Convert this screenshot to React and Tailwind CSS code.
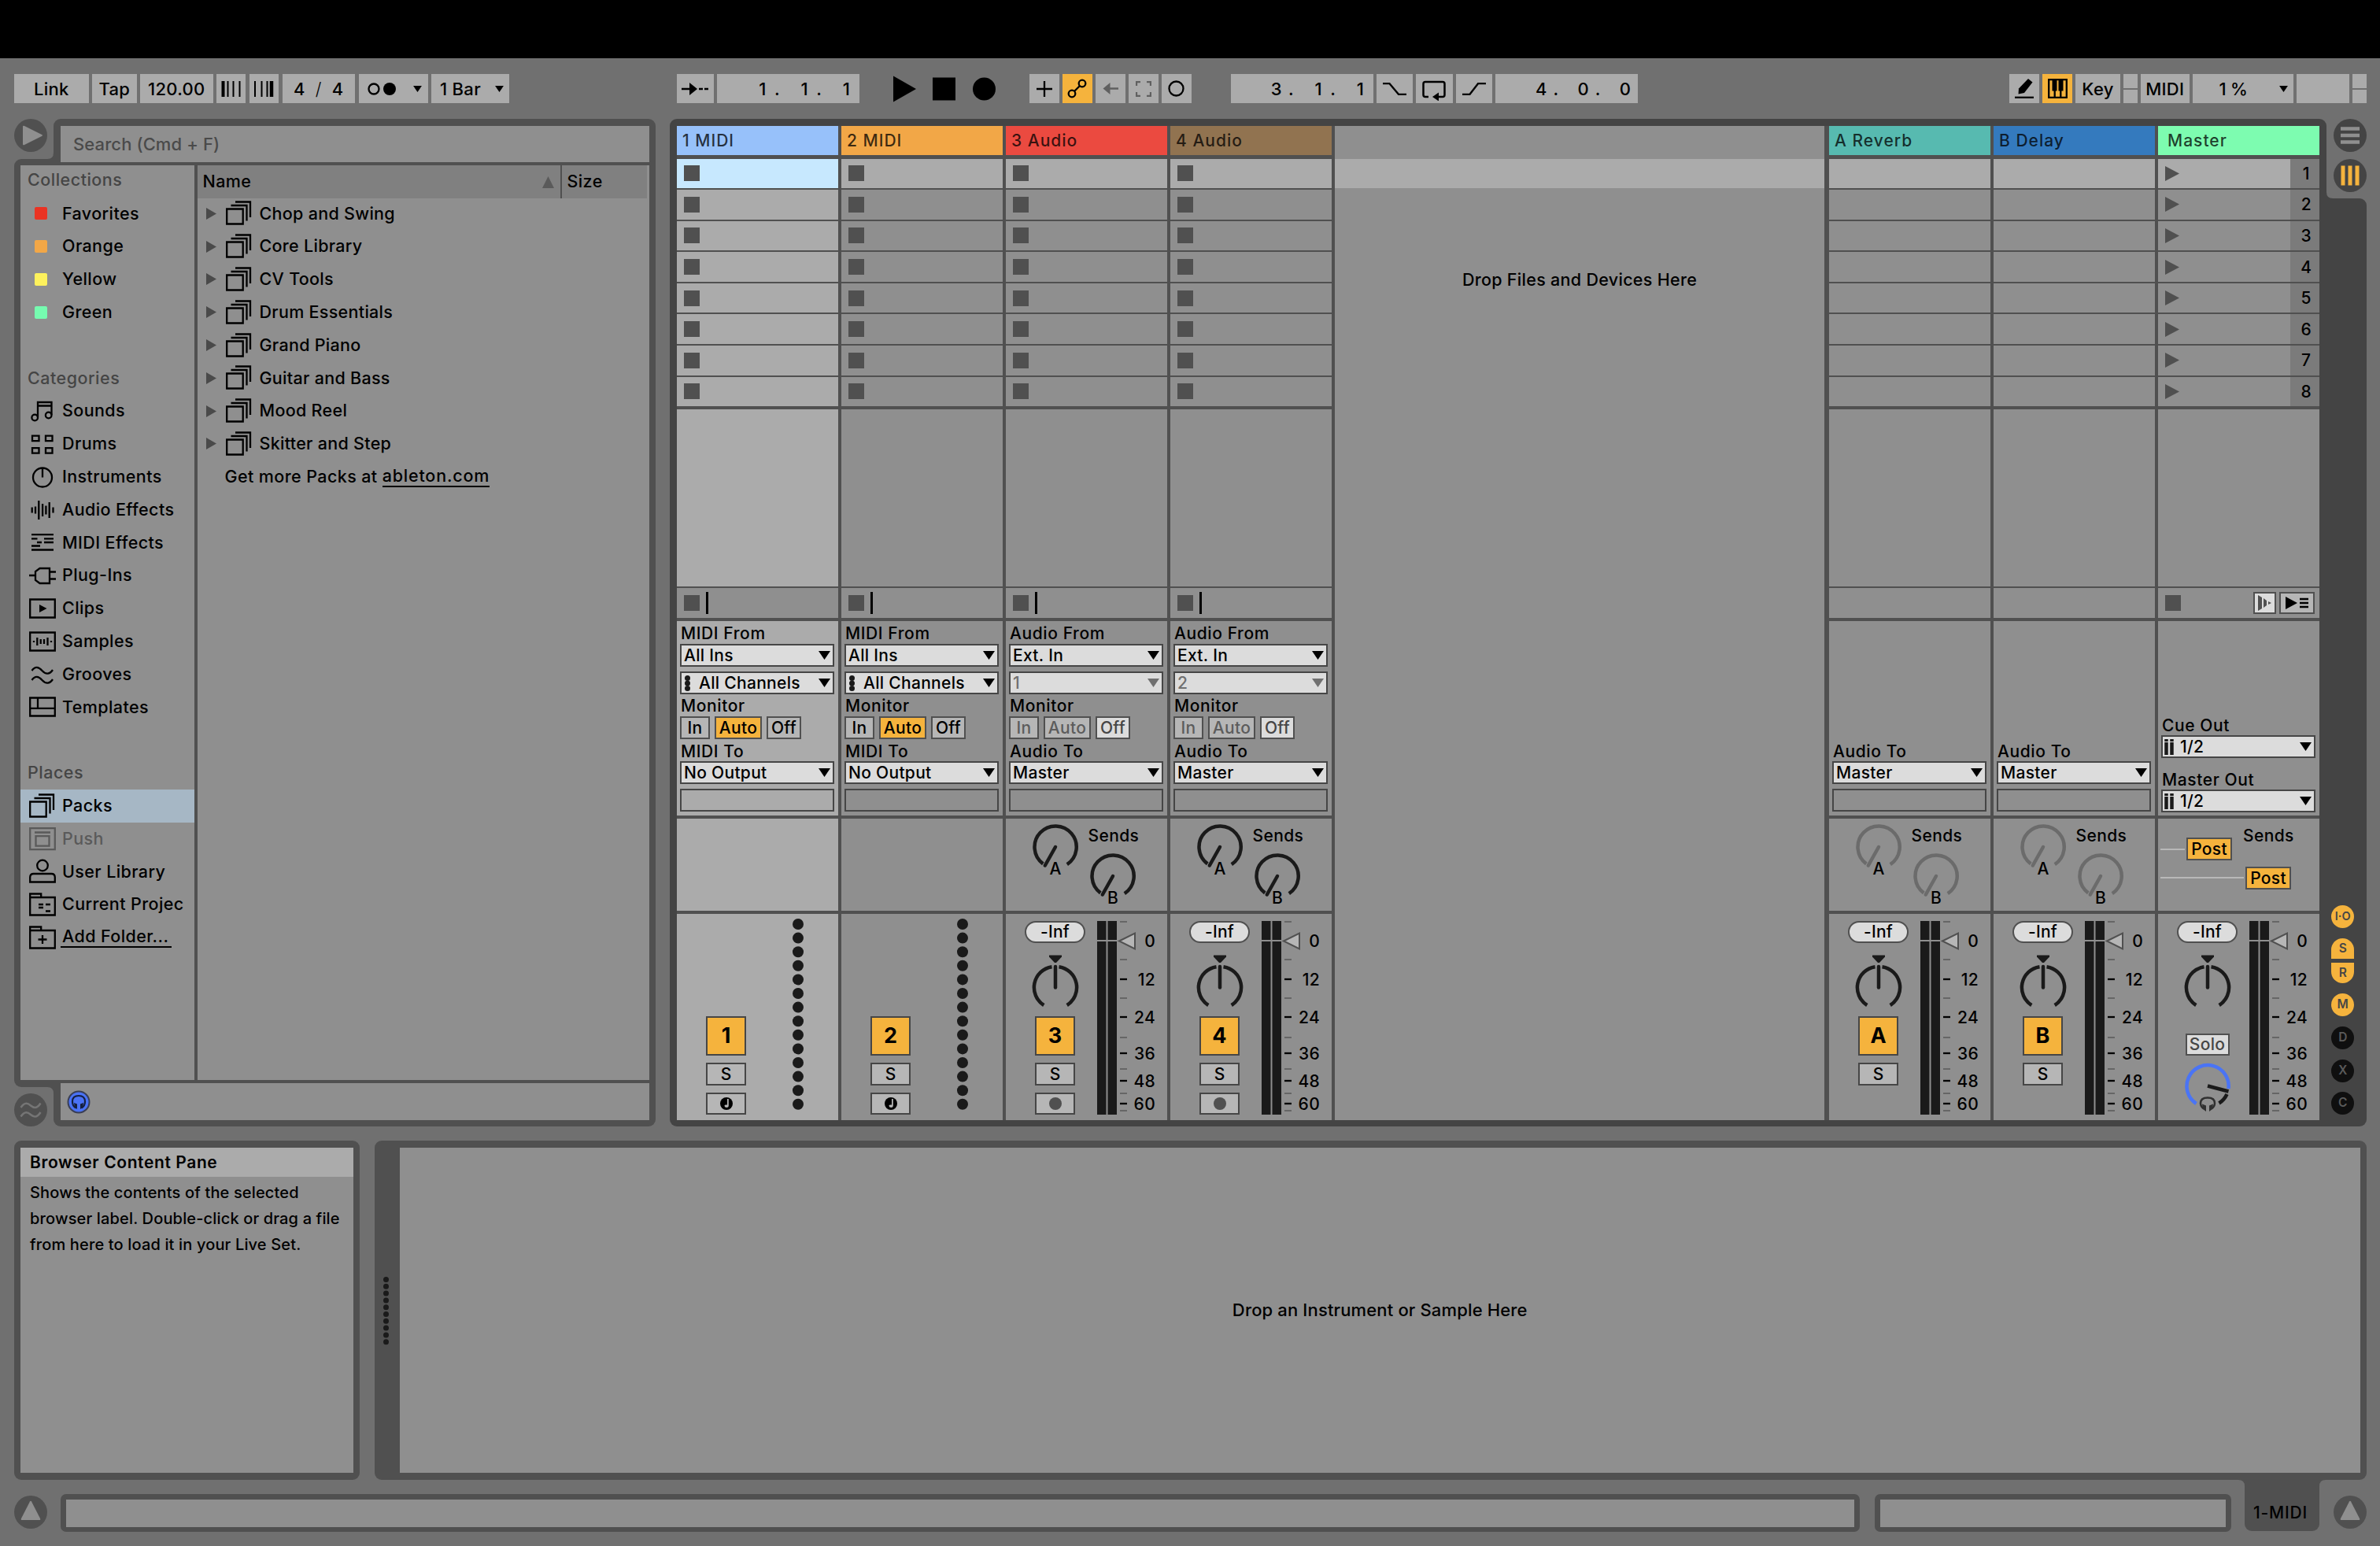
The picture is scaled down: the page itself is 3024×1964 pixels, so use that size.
const packs = [
  "Chop and Swing",
  "Core Library",
  "CV Tools",
  "Drum Essentials",
  "Grand Piano",
  "Guitar and Bass",
  "Mood Reel",
  "Skitter and Step",
];

const collections = [
  { name: "Favorites", color: "bg-[#ea3323]" },
  { name: "Orange", color: "bg-[#f2a747]" },
  { name: "Yellow", color: "bg-[#fdf15c]" },
  { name: "Green", color: "bg-[#76fbb0]" },
];

const sidebarIcons = {
  Sounds: (
    <>
      <path d="M11 25V6h17.5v16M11 10.5h17.5" />
      <circle cx="7.2" cy="25.5" r="3.8" />
      <circle cx="24.7" cy="22.5" r="3.8" />
    </>
  ),
  Drums: <path d="M4 6.7h8.5v6.5H4zM21 6.7h8.5v6.5H21zM4 22.2h8.5v6.5H4zM21 22.2h8.5v6.5H21z" />,
  Instruments: (
    <>
      <circle cx="17" cy="17.5" r="12" />
      <path d="M17 5.5v12" />
    </>
  ),
  "Audio Effects": <path d="M3.7 13.5v7M8 12.5v9M12.3 5v24M17.1 9v16M21.4 11.5v11M25.7 7v20M30.5 13.5v7" />,
  "MIDI Effects": <path d="M3 7.2h28M3 12.4h7.5M19 12.4h12M10 17h6M19 17h12M3 21.5h11M3 26.5h28" />,
  "Plug-Ins": <path d="M0 17h8M26 8v19H13.5L8 23V12l5.5-4zM26 12.5h8M26 21.5h8" />,
  Clips: (
    <>
      <path d="M1.2 5.5h31.6v23H1.2z" />
      <path d="M13 12l9.5 5-9.5 5z" fill="currentColor" stroke="none" />
    </>
  ),
  Samples: <path d="M1.2 5.5h31.6v23H1.2zM6 16v2M10.3 12v10M14.7 14v6M19 14v6M23.5 12v10M28 16v2" />,
  Grooves: <path d="M3.5 12c4-6 8.5-5 13 0s9.500 5 13.500-1M3.500 24c4-6 8.500-5 13 0s9.500 5 13.500-1" />,
  Templates: <path d="M1.2 5.5h31.6v23H1.2zM1.2 18.8h31.6M11 5.5v13.3" />,
  Packs: <path d="M1.2 11.5h20.5v19H1.2zM6.5 7h20v19.5M12 2.5h19v19.5" />,
  Push: <path d="M1.2 3.2h31.6v27H1.2zM7 8.5h20M8.5 13.2h17v12.5h-17z" />,
  "User Library": (
    <>
      <circle cx="17" cy="9.5" r="6.8" />
      <path d="M1.2 30.5v-6q0-4.5 4.5-4.5h22.600q4.500 0 4.500 4.500v6z" />
    </>
  ),
  "Current Projec": (
    <path d="M1.2 30.5v-27h14v4.5h17.6v22.5zM1.2 8h14M12 17h6M21 17h6M12 21h6M21 25.5h6" />
  ),
  "Add Folder...": <path d="M1.2 30.5v-27h14v4.5h17.6v22.5zM1.2 8h14M17 14v11M11.5 19.5h11" />,
};

const categories = [
  "Sounds",
  "Drums",
  "Instruments",
  "Audio Effects",
  "MIDI Effects",
  "Plug-Ins",
  "Clips",
  "Samples",
  "Grooves",
  "Templates",
];
const places = ["Packs", "Push", "User Library", "Current Projec", "Add Folder..."];

const tracks = [
  { id: "1", name: "1 MIDI", kind: "MIDI", header: "bg-[#97c1fa]", selected: true },
  { id: "2", name: "2 MIDI", kind: "MIDI", header: "bg-[#f2a747]" },
  { id: "3", name: "3 Audio", kind: "Audio", header: "bg-[#eb4a40]", channel: "1" },
  { id: "4", name: "4 Audio", kind: "Audio", header: "bg-[#917350]", channel: "2" },
];
const returns = [
  { id: "A", name: "A Reverb", header: "bg-[#57bab0]" },
  { id: "B", name: "B Delay", header: "bg-[#347abe]" },
];
const scenes = [1, 2, 3, 4, 5, 6, 7, 8];

// y positions inside the meter drawing
const majorTicks = [
  [74, "12"],
  [122, "24"],
  [168, "36"],
  [203, "48"],
  [232, "60"],
];
const minorTicks = [1, 49, 98, 148, 188, 219, 241];

function Corner({ className }) {
  return (
    <svg className={`absolute size-2 ${className}`} viewBox="0 0 8 8">
      <path d="M8 0v8H0q8 0 8-8" fill="currentColor" />
    </svg>
  );
}

function SideIcon({ name }) {
  return (
    <svg className="h-[34px] w-[34px] shrink-0" viewBox="0 0 34 34" fill="none" stroke="currentColor" strokeWidth="2.3">
      {sidebarIcons[name]}
    </svg>
  );
}

function Down({ className = "" }) {
  return (
    <svg className={`h-[11px] w-[15px] ${className}`} viewBox="0 0 15 11">
      <path d="M0 0h15L7.5 11z" fill="currentColor" />
    </svg>
  );
}

function Cell({ className = "", children }) {
  return (
    <div className={`flex h-[37px] shrink-0 items-center justify-center bg-[#ababab] whitespace-pre ${className}`}>
      {children}
    </div>
  );
}

function Position({ values }) {
  return (
    <Cell className="w-[181px] justify-end! pr-2">
      {values.map((v, i) => (
        <span key={i} className="flex">
          <span className="w-4 text-center">{v}</span>
          {i < 2 && <span className="w-[37.3px] pl-[7px] text-left">.</span>}
        </span>
      ))}
    </Cell>
  );
}

function Toolbar() {
  return (
    <div className="flex h-[77px] items-center pl-[18px] text-[22px] tracking-[0.3px]">
      <div className="flex gap-[4.5px]">
        <Cell className="w-[94.5px]">Link</Cell>
        <Cell className="w-[56.5px]">Tap</Cell>
        <Cell className="w-[92.5px]">120.00</Cell>
        <Cell className="w-[37px]">
          <svg className="h-5 w-[26px]" viewBox="0 0 26 20" stroke="#000">
            <path d="M2.5 0v20" strokeWidth="4" />
            <path d="M8.5 0v20M15.5 0v20M23.5 0v20" strokeWidth="2" />
          </svg>
        </Cell>
        <Cell className="w-[37.5px]">
          <svg className="h-5 w-[26px]" viewBox="0 0 26 20" stroke="#000">
            <path d="M2 0v20M10.5 0v20M17.5 0v20" strokeWidth="2" />
            <path d="M23 0v20" strokeWidth="4.5" />
          </svg>
        </Cell>
        <Cell className="w-[92.5px] gap-[13px]">
          <span>4</span>
          <span className="font-light">/</span>
          <span>4</span>
        </Cell>
        <Cell className="w-[88px] gap-[22px] pl-1">
          <svg className="h-4 w-9" viewBox="0 0 36 16">
            <circle cx="8" cy="8" r="6.5" fill="none" stroke="#000" strokeWidth="2.3" />
            <circle cx="28" cy="8" r="8" />
          </svg>
          <Down className="h-2! w-[11px]!" />
        </Cell>
        <Cell className="w-[99px] gap-[18px] pl-1">
          <span>1 Bar</span>
          <Down className="h-2! w-[11px]!" />
        </Cell>
      </div>

      <div className="ml-[213px] flex gap-1">
        <Cell className="w-[46.5px]">
          <svg className="h-4 w-[34px]" viewBox="0 0 34 16">
            <path d="M0 8h12M22 8h5M29 8h5" stroke="#000" strokeWidth="2.5" />
            <path d="M10 0l10 8-10 8z" />
          </svg>
        </Cell>
        <Position values={["1", "1", "1"]} />
      </div>

      <svg className="ml-[43px] h-[34px] w-[130px]" viewBox="0 0 130 34">
        <path d="M0 .5l29 16.5L0 33.5z" />
        <path d="M50 2.5h29v29H50z" />
        <circle cx="115.5" cy="17" r="14.5" />
      </svg>

      <div className="ml-[43px] flex gap-1">
        <Cell className="w-[38px]">
          <svg className="h-5 w-5" viewBox="0 0 20 20">
            <path d="M10 0v20M0 10h20" stroke="#000" strokeWidth="2.3" />
          </svg>
        </Cell>
        <Cell className="w-[38px] bg-[#f5b33d]!">
          <svg className="h-[25px] w-[25px]" viewBox="0 0 25 25" fill="none" stroke="#000" strokeWidth="2.3">
            <circle cx="6" cy="19" r="4.3" />
            <circle cx="19" cy="6" r="4.3" />
            <path d="M9 16l7-7" />
          </svg>
        </Cell>
        <Cell className="w-[38px] text-[#606060]">
          <svg className="h-[17px] w-5" viewBox="0 0 20 17">
            <path d="M8 8.5h12" stroke="currentColor" strokeWidth="2.5" />
            <path d="M9.5 1v15L.5 8.5z" fill="currentColor" />
          </svg>
        </Cell>
        <Cell className="w-[38px] text-[#606060]">
          <svg className="h-5 w-5" viewBox="0 0 20 20" fill="none" stroke="currentColor" strokeWidth="2.3">
            <path d="M1 6V1h5M14 1h5v5M19 14v5h-5M6 19H1v-5" />
          </svg>
        </Cell>
        <Cell className="w-[38px]">
          <svg className="h-[21px] w-[21px]" viewBox="0 0 21 21" fill="none" stroke="#000" strokeWidth="2.3">
            <circle cx="10.5" cy="10.5" r="9" />
          </svg>
        </Cell>
      </div>

      <div className="ml-[50px] flex gap-1">
        <Position values={["3", "1", "1"]} />
        <Cell className="w-[46.5px]">
          <svg className="h-4 w-[30px]" viewBox="0 0 30 16" fill="none" stroke="#000" strokeWidth="2.3">
            <path d="M0 1.2h8.5L20 14.8h10" />
          </svg>
        </Cell>
        <Cell className="w-[46.5px]">
          <svg className="mt-1 h-[26px] w-[30px]" viewBox="0 0 30 26" fill="none" stroke="#000" strokeWidth="2.5">
            <path d="M8 21H4q-2.500 0-2.500-2.500v-14Q1.500 2 4 2h22q2.500 0 2.500 2.500v14Q28.500 21 26 21h-5" />
            <path d="M13 21l8-5.5v11z" fill="#000" stroke="none" />
          </svg>
        </Cell>
        <Cell className="w-[46.5px]">
          <svg className="h-4 w-[30px]" viewBox="0 0 30 16" fill="none" stroke="#000" strokeWidth="2.3">
            <path d="M0 14.8h9.5L20 1.2h10" />
          </svg>
        </Cell>
        <Position values={["4", "0", "0"]} />
      </div>

      <div className="mr-[17.5px] ml-auto flex gap-1">
        <Cell className="w-[38px]">
          <svg className="h-[25px] w-6" viewBox="0 0 24 25">
            <path d="M0 23.8h24" stroke="#000" strokeWidth="2.3" />
            <path d="M5 12.5L17 0l5.500 4.500L12 18l-7.500 1.500z" />
          </svg>
        </Cell>
        <Cell className="w-[38px] bg-[#f5b33d]!">
          <svg className="h-[25px] w-[25px]" viewBox="0 0 25 25">
            <path d="M1.2 1.2h22.6v22.6H1.2zM8.7 14v10M16.3 14v10" fill="none" stroke="#000" strokeWidth="2.3" />
            <path d="M5.5 1h6v14.500h-6zM13.500 1h6v14.500h-6z" />
          </svg>
        </Cell>
        <Cell className="w-[57px]">Key</Cell>
        <div className="flex w-[18px] flex-col gap-0.5">
          <div className="flex-1 bg-[#ababab]" />
          <div className="flex-1 bg-[#ababab]" />
        </div>
        <Cell className="w-[61.5px]">MIDI</Cell>
        <Cell className="w-32 justify-end! gap-[40px] pr-[7px]">
          <span className="tracking-[-0.3px]">1 %</span>
          <Down className="h-2! w-[11px]!" />
        </Cell>
        <Cell className="w-[67px]" />
        <div className="flex w-[18px] flex-col gap-0.5">
          <div className="flex-1 bg-[#ababab]" />
          <div className="flex-1 bg-[#ababab]" />
        </div>
      </div>
    </div>
  );
}

function Sidebar() {
  const row = "flex h-[41.8px] items-center gap-2 pl-[11px] whitespace-nowrap";
  const heading = "flex h-[41.8px] items-center pl-[9px] font-medium tracking-[0.5px] text-[#454545]";
  return (
    <div className="w-[220.5px] shrink-0 overflow-hidden bg-[#8f8f8f]">
      <div className={`${heading} h-[40.5px]! pb-[3px]`}>Collections</div>
      {collections.map((c) => (
        <div key={c.name} className={row}>
          <span className="flex w-[34px] pl-[7px]">
            <span className={`size-4 rounded-xs ${c.color}`} />
          </span>
          {c.name}
        </div>
      ))}
      <div className="h-[41.8px]" />
      <div className={heading}>Categories</div>
      {categories.map((name) => (
        <div key={name} className={row}>
          <SideIcon name={name} />
          {name}
        </div>
      ))}
      <div className="h-[41.8px]" />
      <div className={heading}>Places</div>
      {places.map((name) => (
        <div
          key={name}
          className={`${row} ${name === "Packs" ? "bg-[#a6b7c5]" : ""} ${name === "Push" ? "text-[#5a5a5a]" : ""}`}
        >
          <SideIcon name={name} />
          <span className={name.startsWith("Add") ? "-ml-0.5 border-b-[2.5px] border-black pr-1 pl-0.5 leading-[25px]" : ""}>
            {name}
          </span>
        </div>
      ))}
    </div>
  );
}

function Browser() {
  return (
    <div className="flex w-[815px] flex-col text-[21.5px] tracking-[0.4px]">
      <div className="flex h-[51px]">
        <div className="w-[50px] shrink-0">
          <svg className="size-[42px]" viewBox="0 0 42 42">
            <circle cx="21" cy="21" r="21" fill="#505050" />
            <path d="M11 10q0-2 2-1l22 11q2 1 0 2L13 33q-2 1-2-1z" fill="#8f8f8f" />
          </svg>
        </div>
        <div className="relative flex-1 rounded-t-[9px] bg-[#505050] pt-[9px] pr-2 pl-[9px] text-[#505050]">
          <Corner className="bottom-0 -left-2" />
          <div className="flex h-[46px] items-center bg-[#8f8f8f] pl-4 text-[22px] tracking-[0.1px] text-[#4a4a4a]">
            Search (Cmd + F)
          </div>
        </div>
      </div>
      <div className="flex h-[1179px] rounded-l-[9px] bg-[#505050] px-2 pt-2">
        <div className="flex h-[1162px] w-full gap-1">
          <Sidebar />
          <div className="flex flex-1 flex-col bg-[#8f8f8f]">
            <div className="mr-[3px] flex h-[42px] shrink-0 items-center bg-[#808080] font-medium">
              <div className="flex h-full w-[463px] items-center justify-between border-r-2 border-[#505050] pr-2 pl-[7px]">
                Name
                <svg className="h-[15px] w-[15px]" viewBox="0 0 15 15">
                  <path d="M0 15L7.5 0 15 15z" fill="#5a5a5a" />
                </svg>
              </div>
              <span className="pl-[7px]">Size</span>
            </div>
            <div className="-mt-[1.5px]">
              {packs.map((name) => (
                <div key={name} className="flex h-[41.8px] shrink-0 items-center pl-[11px]">
                  <svg className="mr-[12px] h-[15px] w-[13px]" viewBox="0 0 13 15">
                    <path d="M0 0l13 7.5L0 15z" fill="#4a4a4a" />
                  </svg>
                  <SideIcon name="Packs" />
                  <span className="pl-[9px] tracking-[0.3px]">{name}</span>
                </div>
              ))}
              <div className="flex h-[41.8px] items-center pl-[35px]">
                Get more Packs at&nbsp;
                <span className="border-b-[2.5px] border-black leading-[25px] tracking-[0.8px]">ableton.com</span>
              </div>
            </div>
          </div>
        </div>
      </div>
      <div className="flex h-[50px]">
        <div className="w-[50px] shrink-0 pt-[8px]">
          <svg className="size-[42px]" viewBox="0 0 42 42" fill="none">
            <circle cx="21" cy="21" r="21" fill="#505050" />
            <path
              d="M8.5 18c5-7.500 9-5.500 12.500-2.500s8 4.500 12.500-3M8.500 29.500c5-7.500 9-5.500 12.500-2.500s8 4.500 12.500-3"
              stroke="#757575"
              strokeWidth="2.5"
            />
          </svg>
        </div>
        <div className="relative flex-1 rounded-b-[9px] bg-[#505050] pr-2 pb-2 pl-[9px] text-[#505050]">
          <Corner className="top-0 -left-2 -scale-y-100" />
          <div className="-mt-[5px] flex h-[47px] items-center bg-[#8f8f8f] pl-2">
            <svg className="size-[30px]" viewBox="0 0 30 30">
              <circle cx="15" cy="15" r="13.5" fill="#4a72f5" stroke="#3a3f55" strokeWidth="2" />
              <path d="M11.5 22.5Q7 20 7 14.5q0-7.500 8-7.500t8 7.500q0 5.500-4.500 8" fill="none" stroke="#152040" strokeWidth="2.2" />
              <path d="M9 16l4 1.500v6.500l-3-2zM21 16l-4 1.500v6.500l3-2z" fill="#152040" />
            </svg>
          </div>
        </div>
      </div>
    </div>
  );
}

function Select({ children, disabled, icon }) {
  return (
    <div
      className={`flex h-[29px] w-[196px] shrink-0 items-center border-2 border-[#464646] bg-[#dcdcdc] px-[3px] whitespace-nowrap ${disabled ? "text-[#707070]" : "text-black"}`}
    >
      {icon === "dots" && (
        <svg className="mr-[11px] ml-px h-5 w-[7px]" viewBox="0 0 7 20" fill="#1a1a1a">
          <circle cx="3.5" cy="3.5" r="3.5" />
          <circle cx="3.5" cy="10" r="3.5" />
          <circle cx="3.5" cy="16.5" r="3.5" />
        </svg>
      )}
      {icon === "bars" && (
        <svg className="mr-2 -ml-px h-5 w-[12px]" viewBox="0 0 12 20">
          <path d="M2.5 0v20M9.5 0v20" stroke="#1a1a1a" strokeWidth="4.5" />
          <path d="M0 3.5h12" stroke="#dcdcdc" />
        </svg>
      )}
      {children}
      <Down className="ml-auto" />
    </div>
  );
}

function IoLabel({ children }) {
  return <div className="h-5 pl-px leading-[21px] font-medium tracking-[0.6px] whitespace-nowrap">{children}</div>;
}

function Monitor({ audio }) {
  const base = "flex h-[29px] items-center justify-center border-2 border-[#505050]";
  return (
    <div className={`flex h-[29px] ${audio ? "text-[#5c5c5c]" : ""}`}>
      <div className={`${base} w-[38px] bg-[#b6b6b6]`}>In</div>
      <div className={`${base} ml-1.5 w-[60px] ${audio ? "bg-[#b6b6b6]" : "bg-[#f5b33d]"}`}>Auto</div>
      <div className={`${base} ml-1.5 w-[44px] ${audio ? "bg-[#dcdcdc] text-[#464646]" : "bg-[#b6b6b6]"}`}>Off</div>
    </div>
  );
}

function OutputBox() {
  return <div className="h-[29px] w-[196px] border-2 border-[#464646]" />;
}

function Knob({ letter, dim }) {
  const color = dim ? "#6b6b6b" : "#1a1a1a";
  return (
    <svg className="h-[72px] w-[60px]" viewBox="0 0 60 72">
      <path d="M14.3 51.4A26.6 26.6 0 1 1 44.8 52.2" fill="none" stroke={color} strokeWidth="4.5" />
      <path d="M30 30L16.800 53.500" stroke={color} strokeWidth="4.5" strokeLinecap="round" />
      <text x="30" y="64.5" textAnchor="middle" fontSize="21">
        {letter}
      </text>
    </svg>
  );
}

function Sends({ dim }) {
  return (
    <div className="flex pl-[32.500px]">
      <div className="pt-1.5">
        <Knob letter="A" dim={dim} />
      </div>
      <div className="pt-[9px] pl-[13px]">
        <div className="-ml-px h-6 leading-[25px] font-medium tracking-[0.4px]">Sends</div>
        <div className="mt-[10px]">
          <Knob letter="B" dim={dim} />
        </div>
      </div>
    </div>
  );
}

function MasterSends() {
  const post = "flex h-[29px] w-[58px] items-center justify-center border-2 border-[#505050] bg-[#f5b33d]";
  return (
    <div className="-ml-px">
      <div className="flex pt-[9px]">
        <div className="mt-[29px] h-0.5 w-[31px] bg-[#b8b8b8]" />
        <div className={`${post} mt-[15px] ml-[2px]`}>Post</div>
        <div className="ml-3.5 leading-[25px] font-medium tracking-[0.4px]">Sends</div>
      </div>
      <div className="mt-[8px] flex items-center">
        <div className="h-0.5 w-[106px] bg-[#b8b8b8]" />
        <div className={`${post} ml-[2px]`}>Post</div>
      </div>
    </div>
  );
}

function Pan() {
  return (
    <svg className="mt-[13px] h-[72px] w-[60px] shrink-0" viewBox="0 0 60 72" fill="none" stroke="#1a1a1a" strokeWidth="4.5">
      <path d="M22 2.5h16v2l-7 7.5h-2l-7-7.500z" fill="#1a1a1a" stroke="none" />
      <path d="M15.3 66A26.600 26.600 0 0 1 25.5 17.2M34.500 17.2A26.600 26.600 0 0 1 44.700 66" />
      <path d="M30 17v26.500" strokeLinecap="round" />
    </svg>
  );
}

function CueKnob() {
  return (
    <svg className="mt-2 h-[66px] w-[60px] shrink-0" viewBox="0 0 60 66" fill="none" strokeWidth="4.5">
      <path d="M15.5 53A26.600 26.600 0 1 1 56.5 34" stroke="#4a74f5" />
      <path d="M54.5 41A26.600 26.600 0 0 1 44.5 52.5M30 30.500L56.500 37.500" stroke="#1a1a1a" />
      <path d="M25 59.500q-4-3-4-7 0-7 9-7t9 7q0 4-4 7" stroke="#303030" strokeWidth="2.5" />
      <path d="M23 53.500l5 2v7.500l-4-3zM37 53.500l-5 2v7.500l4-3z" fill="#303030" />
    </svg>
  );
}

function Meter() {
  return (
    <svg className="mt-[9px] ml-[15px] h-[248px] w-[76px] overflow-visible" viewBox="0 0 76 248">
      <path d="M0 0h11.500v246H0zM13.500 0h11.500v246H13.500z" fill="#1a1a1a" />
      <path d="M0 25h25" stroke="#8f8f8f" strokeWidth="2" />
      {minorTicks.map((y) => (
        <path key={y} d={`M29 ${y}h9`} stroke="#666" strokeWidth="2" />
      ))}
      {majorTicks.map(([y, label]) => (
        <g key={label}>
          <path d={`M29 ${y}h9`} stroke="#000" strokeWidth="2.3" />
          <text x="74" y={y + 7.5} textAnchor="end" fontSize="21">
            {label}
          </text>
        </g>
      ))}
      <path d="M28 25.5L48 15.5v20z" fill="#b6b6b6" stroke="#505050" strokeWidth="2" />
      <text x="74" y="33" textAnchor="end" fontSize="21">
        0
      </text>
    </svg>
  );
}

function MidiDots() {
  return (
    <svg className="mt-1.5 ml-[46px] h-[246px] w-[14px]" viewBox="0 0 14 246" fill="#1a1a1a">
      {Array.from({ length: 14 }, (_, i) => (
        <circle key={i} cx="7" cy={7 + i * 17.6} r="7" />
      ))}
    </svg>
  );
}

function Mixer({ id, midi, armable }) {
  const box = "flex w-[51px] items-center justify-center border-2 border-[#464646] bg-[#b6b6b6] tracking-normal";
  return (
    <div className="flex h-[262px] pl-6">
      <div className="flex w-[77px] flex-col items-center pt-[9px]">
        {midi ? (
          <div className="h-[113px] shrink-0" />
        ) : (
          <>
            <div className="flex h-[28px] w-full shrink-0 items-center justify-center rounded-full border-2 border-[#505050] bg-[#dcdcdc]">
              -Inf
            </div>
            <Pan />
          </>
        )}
        {id ? (
          <>
            <div className={`${box} mt-2 h-[50px] bg-[#f5b33d]! text-[27px] font-bold`}>{id}</div>
            <div className={`${box} mt-[9px] h-[29px] font-medium`}>S</div>
          </>
        ) : (
          <>
            <div className="mt-[30px] flex h-7 w-14 items-center justify-center border-2 border-[#505050] bg-[#dcdcdc] text-[#464646]">
              Solo
            </div>
            <CueKnob />
          </>
        )}
        {armable && (
          <div className={`${box} mt-[9px] h-[28px]`}>
            <svg className="size-4" viewBox="0 0 16 16">
              <circle cx="8" cy="8" r="8" fill={midi ? "#000" : "#505050"} />
              {midi && <path d="M9 2h1.800v9q0 2-2.500 2T5.500 11 8 9.500h1z" fill="#b6b6b6" />}
            </svg>
          </div>
        )}
      </div>
      {midi ? <MidiDots /> : <Meter />}
    </div>
  );
}

// One vertical strip: header, eight slots, stop row, routing, sends, mixer
function Strip({ header, name, selected, slot, stop, io, sends, mixer }) {
  const bg = selected ? "bg-[#ababab]" : "bg-[#8f8f8f]";
  return (
    <div className="flex h-full w-[205px] shrink-0 flex-col">
      <div className={`flex h-[37px] shrink-0 items-center font-medium tracking-[1px] text-black/75 ${header}`}>{name}</div>
      <div className="mt-[4.5px] flex flex-col gap-[2px]">
        {scenes.map((n) => {
          const tint = n === 1 ? (selected ? "bg-[#c7e8fe]" : "bg-[#ababab]") : bg;
          return (
            <div key={n} className={`flex h-[37.6px] items-center ${tint}`}>
              {slot(n)}
            </div>
          );
        })}
      </div>
      <div className={`mt-1 h-[225px] ${bg}`} />
      <div className="mt-0.5 flex h-[37.5px] items-center bg-[#8f8f8f]">{stop}</div>
      <div className={`mt-[4.5px] h-[246.5px] px-1 ${bg}`}>{io}</div>
      <div className={`mt-1 h-[117px] ${bg}`}>{sends}</div>
      <div className={`mt-1 flex-1 ${bg}`}>{mixer}</div>
    </div>
  );
}

function StopSquare() {
  return <div className="ml-[8.5px] size-5 bg-[#505050]" />;
}

function Session() {
  return (
    <div className="flex h-full gap-1 bg-[#505050]">
      {tracks.map((t) => {
        const midi = t.kind === "MIDI";
        return (
          <Strip
            key={t.id}
            header={t.header}
            name={<span className="pl-[7px]">{t.name}</span>}
            selected={t.selected}
            slot={() => <StopSquare />}
            stop={
              <>
                <StopSquare />
                <div className="ml-2 h-7 w-[3px] bg-black" />
              </>
            }
            io={
              <>
                <div className="h-[5px]" />
                <IoLabel>{t.kind} From</IoLabel>
                <div className="h-1" />
                <Select>{midi ? "All Ins" : "Ext. In"}</Select>
                <div className="h-1.5" />
                <Select disabled={!midi} icon={midi ? "dots" : undefined}>
                  {midi ? "All Channels" : t.channel}
                </Select>
                <div className="h-1" />
                <IoLabel>Monitor</IoLabel>
                <div className="h-1" />
                <Monitor audio={!midi} />
                <div className="h-[5px]" />
                <IoLabel>{t.kind} To</IoLabel>
                <div className="h-[3px]" />
                <Select>{midi ? "No Output" : "Master"}</Select>
                <div className="h-1.5" />
                <OutputBox />
              </>
            }
            sends={midi ? null : <Sends />}
            mixer={<Mixer id={t.id} midi={midi} armable />}
          />
        );
      })}

      <div className="flex flex-1 flex-col bg-[#8f8f8f]">
        <div className="mt-[41.5px] h-[37.6px] bg-[#ababab]" />
        <div className="pt-[106px] text-center text-[21.5px]">Drop Files and Devices Here</div>
      </div>

      <div className="ml-0.5 flex gap-1">
        {returns.map((r) => (
          <Strip
            key={r.id}
            header={r.header}
            name={<span className="pl-[7px]">{r.name}</span>}
            slot={() => null}
            io={
              <>
                <div className="h-[155px]" />
                <IoLabel>Audio To</IoLabel>
                <div className="h-[3px]" />
                <Select>Master</Select>
                <div className="h-1.5" />
                <OutputBox />
              </>
            }
            sends={<Sends dim />}
            mixer={<Mixer id={r.id} />}
          />
        ))}
        <Strip
          header="bg-[#7dfcb0]"
          name={<span className="pl-3">Master</span>}
          slot={(n) => (
            <>
              <svg className="ml-[9px] h-[19px] w-[18px]" viewBox="0 0 18 19">
                <path d="M0 0l18 9.5L0 19z" fill="#505050" />
              </svg>
              <div className="ml-auto flex h-full w-[37.5px] items-center justify-center bg-[#7b7b7b] pl-1">{n}</div>
            </>
          )}
          stop={
            <>
              <StopSquare />
              <div className="ml-auto flex h-7 w-[29px] items-center justify-center border-2 border-[#505050] bg-[#dcdcdc]">
                <svg className="h-5 w-[17px]" viewBox="0 0 17 20" fill="#505050">
                  <path d="M0 0l5 3v14l-5 3zM7 4l4 3v6l-4 3zM13 8l4 2-4 2z" />
                </svg>
              </div>
              <div className="mr-[6px] ml-1 flex h-7 w-[45px] items-center justify-center border-2 border-[#505050] bg-[#b6b6b6]">
                <svg className="h-4 w-[30px]" viewBox="0 0 30 16">
                  <path d="M0 0l15 8-15 8z" />
                  <path d="M18 3h11M18 8h11M18 13h11" stroke="#000" strokeWidth="2.3" />
                </svg>
              </div>
            </>
          }
          io={
            <>
              <div className="h-[122px]" />
              <IoLabel>Cue Out</IoLabel>
              <div className="h-[3px]" />
              <Select icon="bars">1/2</Select>
              <div className="h-[17px]" />
              <IoLabel>Master Out</IoLabel>
              <div className="h-[3px]" />
              <Select icon="bars">1/2</Select>
            </>
          }
          sends={
            <div className="pl-1">
              <MasterSends />
            </div>
          }
          mixer={<Mixer />}
        />
      </div>
    </div>
  );
}

function SectionToggles() {
  const on = "bg-[#f5b33d] text-[#464646]";
  const off = "bg-[#0f0f0f] text-[#5a5a5a]";
  const round = "flex w-[29px] items-center justify-center";
  return (
    <div className="flex flex-col items-center pr-[9px] text-[15.5px] font-semibold tracking-normal">
      <div className={`${round} h-[29px] rounded-full text-[14.5px] ${on}`}>I·O</div>
      <div className={`${round} mt-[13px] h-[26px] rounded-t-full ${on}`}>S</div>
      <div className={`${round} mt-[4.5px] h-[26px] rounded-b-full ${on}`}>R</div>
      <div className={`${round} mt-[13px] h-[29px] rounded-full ${on}`}>M</div>
      <div className={`${round} mt-[13px] h-[29px] rounded-full ${off}`}>D</div>
      <div className={`${round} mt-[13px] h-[29px] rounded-full ${off}`}>X</div>
      <div className={`${round} mt-[12px] h-[29px] rounded-full ${off}`}>C</div>
    </div>
  );
}

function UpButton() {
  return (
    <svg className="size-[42px] shrink-0" viewBox="0 0 42 42">
      <circle cx="21" cy="21" r="21" fill="#505050" />
      <path d="M20 7.5q1-1.500 2 0L33 29q1 2-1 2H10q-2 0-1-2z" fill="#8f8f8f" />
    </svg>
  );
}

export default function App() {
  return (
    <div className="h-[1964px] w-[3024px] overflow-hidden bg-[#707070] font-['Inter','Liberation_Sans',sans-serif] text-[21px] leading-none font-[450] text-black">
      <div className="h-[74px] bg-black" />
      <Toolbar />

      <div className="flex h-[1280px] pl-[18px]">
        <Browser />
        <div className="ml-[18px] w-[2105px] rounded-l-[9px] rounded-tr-[9px] bg-[#444] pt-[9px] pr-[9px] pb-2 pl-[9px] tracking-[0.3px]">
          <Session />
        </div>
        <div className="flex w-[50.5px] flex-col">
          <div className="relative flex h-[101px] shrink-0 flex-col items-end gap-[8.5px] text-[#444]">
            <Corner className="bottom-0 left-0 -scale-x-100" />
            <svg className="size-[42px]" viewBox="0 0 42 42">
              <circle cx="21" cy="21" r="21" fill="#444" />
              <path d="M9 12.5h24M9 21h24M9 29.5h24" stroke="#8f8f8f" strokeWidth="4.5" />
            </svg>
            <svg className="size-[42px]" viewBox="0 0 42 42">
              <circle cx="21" cy="21" r="21" fill="#444" />
              <path d="M12 8.5v25M21 8.5v25M30 8.5v25" stroke="#f5b33d" strokeWidth="5" />
            </svg>
          </div>
          <div className="flex-1 rounded-r-[9px] bg-[#444] pt-[898px]">
            <SectionToggles />
          </div>
        </div>
      </div>

      <div className="mt-[18px] flex h-[431px] gap-[19px] pr-[17.5px] pl-[18px]">
        <div className="w-[439px] shrink-0 rounded-[9px] bg-[#505050] px-2 py-[9px]">
          <div className="h-full bg-[#8f8f8f]">
            <div className="flex h-[37px] items-center bg-[#ababab] pl-3 font-semibold tracking-[0.6px]">
              Browser Content Pane
            </div>
            <p className="pt-[4px] pl-3 text-[20px] leading-[33px] tracking-[0.15px]">
              Shows the contents of the selected
              <br />
              browser label. Double-click or drag a file
              <br />
              from here to load it in your Live Set.
            </p>
          </div>
        </div>
        <div className="flex flex-1 rounded-[9px] bg-[#505050] py-[9px] pr-2">
          <div className="flex w-8 shrink-0 items-center justify-center pr-1">
            <svg className="h-[88px] w-[7px]" viewBox="0 0 7 88" fill="#1a1a1a">
              {Array.from({ length: 10 }, (_, i) => (
                <circle key={i} cx="3.5" cy={4.5 + i * 8.8} r="3.5" />
              ))}
            </svg>
          </div>
          <div className="flex flex-1 items-center justify-center bg-[#8f8f8f] pb-0.5 text-[22px] tracking-[0.15px]">
            Drop an Instrument or Sample Here
          </div>
        </div>
      </div>

      <div className="flex h-[84px] pr-[17.5px] pl-[18px]">
        <div className="pt-5">
          <UpButton />
        </div>
        <div className="mt-[18px] ml-[17px] h-12 w-[2286px] rounded-[7px] border-x-[7px] border-t-[7px] border-b-[6px] border-[#505050] bg-[#8f8f8f]" />
        <div className="mt-[18px] ml-[19px] h-12 w-[453px] rounded-[7px] border-x-[7px] border-t-[7px] border-b-[6px] border-[#505050] bg-[#8f8f8f]" />
        <div className="relative ml-[17px] flex h-[65px] w-[95px] items-center justify-center rounded-b-[9px] bg-[#505050] pt-[17px] pr-1 text-[#505050]">
          <Corner className="top-0 -left-2 -scale-y-100" />
          <Corner className="top-0 -right-2 -scale-100" />
          <span className="font-medium tracking-[0.8px] whitespace-nowrap text-black">1-MIDI</span>
        </div>
        <div className="ml-auto pt-5">
          <UpButton />
        </div>
      </div>
    </div>
  );
}
